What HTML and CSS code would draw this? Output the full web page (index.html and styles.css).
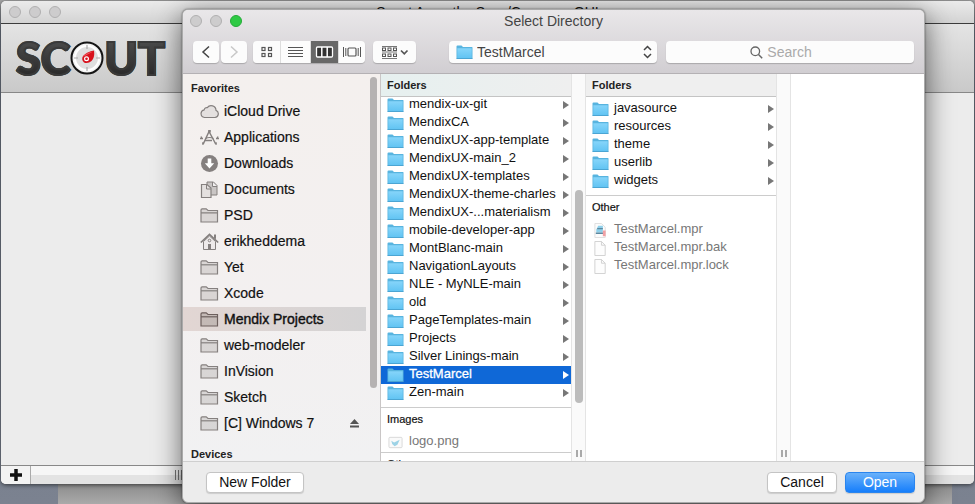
FILE: index.html
```html
<!DOCTYPE html>
<html lang="en">
<head>
<meta charset="utf-8">
<title>Select Directory</title>
<link rel="stylesheet" href="styles.css">
</head>
<body>
<svg class="sprite" aria-hidden="true">
  <defs>
    <linearGradient id="blue" x1="0" y1="0" x2="0" y2="1"><stop offset="0" stop-color="#86d5fa"/><stop offset="1" stop-color="#62c4f3"/></linearGradient>
  </defs>
  <symbol id="folder" viewBox="0 0 17 15">
    <path d="M.5 13.5V1.5q0-1 1-1h4l1.500 1.500h9q.5 0 .5.5v11z" fill="#58b4df"/>
    <path d="M1.300 13V3.300h14.400V13z" fill="url(#blue)"/>
    <path d="M.5 13.500h16" stroke="#4ba5d3"/>
  </symbol>
  <symbol id="gfolder" viewBox="0 0 19 17">
    <path d="M1 14.500V3q0-1.200 1.200-1.200h4L8 3.500h9.500V15H1z" fill="currentColor" fill-opacity=".24" stroke="currentColor" stroke-width="1.200"/>
    <path d="M1 5.800h16.500" stroke="currentColor" stroke-width="1.200"/>
  </symbol>
  <symbol id="cloud" viewBox="0 0 19 17">
    <path d="M4.500 14.500a3.900 3.900 0 0 1-.3-7.700 2.600 2.600 0 0 1 3.100-2.100 4.800 4.800 0 0 1 8.700 2.700 3.700 3.700 0 0 1-1 7.100z" fill="#e4e0df" stroke="currentColor" stroke-width="1.200"/>
  </symbol>
  <symbol id="apps" viewBox="0 0 19 17">
    <g fill="none" stroke="currentColor" stroke-width="1.500"><path d="M3 15.500 9.500 1.500M9 2.500l7 13"/><path d="M5.500 9.500q4-2 8 0" stroke-width="1.200"/><path d="M0 9.500h3M5 11.500h7M16 9.500h3M1 7.500l1 2M18 7.500l-1 2" stroke-width="1.300"/></g>
    <path d="m2 16 .3-3 2 1zM17 16l-.4-3-2 1zM8.200 1h2.600v2.500H8.200z" fill="currentColor"/>
  </symbol>
  <symbol id="down" viewBox="0 0 19 17">
    <circle cx="9.500" cy="8.500" r="8.500" fill="currentColor"/><path d="M7.700 3.500h3.600v4.700h2.900L9.500 13.500 4.800 8.200h2.900z" fill="#fff"/>
  </symbol>
  <symbol id="docs" viewBox="0 0 19 17">
    <path d="M7 1h6.500L17 4.500V14H7z" fill="#c9c5c4" stroke="currentColor"/><path d="M12.500 1v4.500H17" fill="#f2f0f0" stroke="currentColor"/>
    <path d="M1.500 3.500H7L11 7v9.500H1.500z" fill="#e4e0df" stroke="currentColor" stroke-width="1.200"/><path d="M6.500 3.500V8H11" fill="none" stroke="currentColor"/>
  </symbol>
  <symbol id="home" viewBox="0 0 19 17">
    <path d="M3.500 8.500v8h12v-8l-6-5.500z" fill="#eeeaea" stroke="currentColor"/><path d="M.8 9.500 9.500 1.300l8.700 8.200" fill="none" stroke="currentColor" stroke-width="1.700"/><path d="M14 1.500h2v5l-2-2z" fill="currentColor"/><path d="M8 11h3v5.500H8z" fill="currentColor"/><circle cx="9.500" cy="7.500" r="1.300" fill="none" stroke="currentColor"/>
  </symbol>
  <symbol id="file" viewBox="0 0 17 16">
    <path d="M2.500.5h7l4 4v11h-11z" fill="#fdfdfd" stroke="#d0d0d0"/><path d="M9.500.5v4h4" fill="none" stroke="#d0d0d0"/>
  </symbol>
  <symbol id="mpr" viewBox="0 0 17 16">
    <path d="M2.500.5h7l4 4v11h-11z" fill="#fcfcfc" stroke="#dedede"/><path d="M4 7l2-4h5v7H4z" fill="#8fd0ea"/><path d="M5 6h6M3.500 11h8" stroke="#5c88a0" stroke-width="1.500"/><path d="M11 8h3v6h-3z" fill="#f0a0a4"/>
  </symbol>
  <symbol id="image" viewBox="0 0 17 16">
    <rect x="1.500" y="2.500" width="14" height="11" rx="1" fill="#fafafa" stroke="#d8d8d8"/><path d="m4 6 3 2 6-3-2.500 5.500L7.500 12 5 9.500z" fill="#9dd3e6"/>
  </symbol>
</svg>

<main class="app">
  <header class="app-title"><span class="lights"><i></i><i></i><i></i></span><span>Scout App - the Sass/Compass GUI</span></header>
  <div class="brand" role="img" aria-label="Scout">
    <span>SC</span>
    <svg class="compass" viewBox="0 0 34 34">
      <circle cx="17" cy="17" r="15.500" fill="#f3f3f3" stroke="#151515" stroke-width="2"/>
      <circle cx="17" cy="17" r="12" fill="#dfdfdf" stroke="#fff" stroke-width="2"/>
      <path d="M17 4v4M17 26v4M4 17h4M26 17h4" stroke="#aaa" stroke-width="1.200"/>
      <path d="M24 9.500q1 7-2.500 10.500-3.500 3-7.500 1.500-3-3-1-6.500Q17 10.500 24 9.500z" fill="#d8121d"/>
      <path d="M23 10.500 13 16q2-4 10-5.500z" fill="#f4545b"/>
      <circle cx="16.500" cy="17.800" r="2.500" fill="#fff"/><circle cx="16.500" cy="17.800" r="1.300" fill="#d8121d"/>
    </svg>
    <span>UT</span>
  </div>
  <div class="app-body"></div>
  <footer class="app-foot">
    <button class="add" aria-label="Add"><svg viewBox="0 0 12 12"><path d="M6 0v12M0 6h12" stroke="#111" stroke-width="3.500"/></svg></button>
    <span class="grip"></span>
  </footer>
</main>

<section class="dialog" role="dialog" aria-labelledby="dlg-title">
  <header class="top">
    <div class="title-row"><span class="lights"><i></i><i></i><i class="green"></i></span><h1 id="dlg-title">Select Directory</h1></div>
    <div class="tools">
      <div class="nav-buttons">
        <button class="back" aria-label="Back"><svg width="26" height="22" viewBox="0 0 26 22"><path d="m16 5.500-6 5.500 6 5.500" fill="none" stroke="#444" stroke-width="1.500"/></svg></button>
        <button class="forward" aria-label="Forward"><svg width="26" height="22" viewBox="0 0 26 22"><path d="m10 5.500 6 5.500-6 5.500" fill="none" stroke="#c8c8c8" stroke-width="1.500"/></svg></button>
      </div>
      <div class="views">
        <button aria-label="Icons"><svg width="27" height="22" viewBox="0 0 27 22"><g fill="none" stroke="#555" stroke-width="1.200"><rect x="9" y="6.500" width="3" height="3"/><rect x="15.500" y="6.500" width="3" height="3"/><rect x="9" y="12.500" width="3" height="3"/><rect x="15.500" y="12.500" width="3" height="3"/></g></svg></button>
        <button aria-label="List"><svg width="29" height="22" viewBox="0 0 29 22"><path d="M7 6.500h15M7 9.500h15M7 12.500h15M7 15.500h15" stroke="#555"/></svg></button>
        <button class="on" aria-label="Columns" aria-pressed="true"><svg width="27" height="22" viewBox="0 0 27 22"><rect x="5.500" y="6" width="16" height="10" rx="1" fill="#333" stroke="#fff" stroke-width="1.300"/><path d="M10.800 6v10M16.200 6v10" stroke="#fff" stroke-width="1.500"/></svg></button>
        <button aria-label="Cover flow"><svg width="26" height="22" viewBox="0 0 26 22"><g fill="none" stroke="#555"><rect x="9" y="7" width="8" height="8" rx="1" stroke-width="1.200"/><path d="M4.500 6v10M6.800 7v8M19.200 7v8M21.500 6v10"/></g></svg></button>
      </div>
      <button class="arrange" aria-label="Arrange"><svg width="43" height="22" viewBox="0 0 43 22"><g fill="none" stroke="#555"><path d="M9 5.500h15M9 11h15M9 17.500h15" stroke-width=".8"/><rect x="9.500" y="7" width="3" height="2.500"/><rect x="15" y="7" width="3" height="2.500"/><rect x="20.500" y="7" width="3" height="2.500"/><rect x="9.500" y="13" width="3" height="2.500"/><rect x="15" y="13" width="3" height="2.500"/><rect x="20.500" y="13" width="3" height="2.500"/><path d="m28 9.500 3.300 3.300 3.200-3.300" stroke-width="1.700"/></g></svg></button>
      <div class="path">
        <svg class="ic"><use href="#folder"/></svg>
        <select aria-label="Current folder"><option>TestMarcel</option></select>
        <svg class="updown" viewBox="0 0 9 14"><path d="m1 5 3.500-3.500L8 5M1 9l3.500 3.500L8 9" fill="none" stroke="#444" stroke-width="1.500"/></svg>
      </div>
      <label class="search">
        <svg viewBox="0 0 13 13"><circle cx="5.300" cy="5.300" r="4.300" fill="none" stroke="#666" stroke-width="1.300"/><path d="m8.500 8.500 3.700 3.700" stroke="#666" stroke-width="1.500"/></svg>
        <input type="search" placeholder="Search" aria-label="Search">
      </label>
    </div>
  </header>

  <div class="browser">
    <aside class="side">
      <nav>
        <h2>Favorites</h2>
        <ul>
          <li><svg><use href="#cloud"/></svg>iCloud Drive</li>
          <li><svg><use href="#apps"/></svg>Applications</li>
          <li><svg><use href="#down"/></svg>Downloads</li>
          <li><svg><use href="#docs"/></svg>Documents</li>
          <li><svg><use href="#gfolder"/></svg>PSD</li>
          <li><svg><use href="#home"/></svg>erikheddema</li>
          <li><svg><use href="#gfolder"/></svg>Yet</li>
          <li><svg><use href="#gfolder"/></svg>Xcode</li>
          <li class="current"><svg><use href="#gfolder"/></svg>Mendix Projects</li>
          <li><svg><use href="#gfolder"/></svg>web-modeler</li>
          <li><svg><use href="#gfolder"/></svg>InVision</li>
          <li><svg><use href="#gfolder"/></svg>Sketch</li>
          <li><svg><use href="#gfolder"/></svg>[C] Windows 7<button class="eject" aria-label="Eject"><svg viewBox="0 0 9 9"><path d="M4.500 0 9 5H0zM0 6.500h9v2H0z" fill="#555"/></svg></button></li>
        </ul>
        <h2 class="devices">Devices</h2>
      </nav>
      <div class="bar"><i></i></div>
    </aside>

    <div class="col">
      <h2 class="col-head tint">Folders</h2>
      <div class="col-body">
        <ul class="rows scrolled">
          <li><svg><use href="#folder"/></svg><span>mendix-ux-git</span></li>
          <li><svg><use href="#folder"/></svg><span>MendixCA</span></li>
          <li><svg><use href="#folder"/></svg><span>MendixUX-app-template</span></li>
          <li><svg><use href="#folder"/></svg><span>MendixUX-main_2</span></li>
          <li><svg><use href="#folder"/></svg><span>MendixUX-templates</span></li>
          <li><svg><use href="#folder"/></svg><span>MendixUX-theme-charles</span></li>
          <li><svg><use href="#folder"/></svg><span>MendixUX-...materialism</span></li>
          <li><svg><use href="#folder"/></svg><span>mobile-developer-app</span></li>
          <li><svg><use href="#folder"/></svg><span>MontBlanc-main</span></li>
          <li><svg><use href="#folder"/></svg><span>NavigationLayouts</span></li>
          <li><svg><use href="#folder"/></svg><span>NLE - MyNLE-main</span></li>
          <li><svg><use href="#folder"/></svg><span>old</span></li>
          <li><svg><use href="#folder"/></svg><span>PageTemplates-main</span></li>
          <li><svg><use href="#folder"/></svg><span>Projects</span></li>
          <li><svg><use href="#folder"/></svg><span>Silver Linings-main</span></li>
          <li class="selected"><svg><use href="#folder"/></svg><span>TestMarcel</span></li>
          <li><svg><use href="#folder"/></svg><span>Zen-main</span></li>
        </ul>
        <h3>Images</h3>
        <ul class="rows files"><li><svg><use href="#image"/></svg><span>logo.png</span></li></ul>
        <h3>Other</h3>
      </div>
    </div>
    <div class="gutter"><i></i><b></b></div>

    <div class="col">
      <h2 class="col-head">Folders</h2>
      <div class="col-body">
        <ul class="rows">
          <li><svg><use href="#folder"/></svg><span>javasource</span></li>
          <li><svg><use href="#folder"/></svg><span>resources</span></li>
          <li><svg><use href="#folder"/></svg><span>theme</span></li>
          <li><svg><use href="#folder"/></svg><span>userlib</span></li>
          <li><svg><use href="#folder"/></svg><span>widgets</span></li>
        </ul>
        <h3>Other</h3>
        <ul class="rows files">
          <li><svg><use href="#mpr"/></svg><span>TestMarcel.mpr</span></li>
          <li><svg><use href="#file"/></svg><span>TestMarcel.mpr.bak</span></li>
          <li><svg><use href="#file"/></svg><span>TestMarcel.mpr.lock</span></li>
        </ul>
      </div>
    </div>
    <div class="gutter"><b></b></div>
  </div>

  <footer class="actions">
    <button class="new">New Folder</button>
    <button>Cancel</button>
    <button class="primary">Open</button>
  </footer>
</section>
</body>
</html>
```
FILE: styles.css
```css
* { box-sizing: border-box; }

body {
  margin: 0;
  height: 100vh;
  display: flex;
  flex-direction: column;
  overflow: hidden;
  position: relative;
  padding: 1px 1px 20px;
  font-family: "Liberation Sans", Arial, sans-serif;
  font-size: 13px;
  color: #111;
  background:
    linear-gradient(#8c8c8c, #aaa) 58px 100% / calc(100% - 81px) 20px no-repeat,
    linear-gradient(#a5a5a5, #6b7380 30px, #7b8290);
}

button, input, select { font: inherit; color: inherit; margin: 0; padding: 0; border: 0; background: none; }
h1, h2, h3, ul { margin: 0; padding: 0; list-style: none; }
svg { display: block; flex: none; }
.sprite { position: absolute; width: 0; height: 0; }

.lights { display: flex; gap: 8px; }
.lights i { width: 12px; height: 12px; border-radius: 50%; background: #cdcccd; border: 1px solid #b0afb0; }
.lights .green { background: #2fca45; border-color: #24ab38; }

/* Window behind the dialog */
.app {
  flex: 1;
  display: flex;
  flex-direction: column;
  border-radius: 5px;
  overflow: hidden;
  background: #ececec;
  box-shadow: 0 1px 4px #0009;
}
.app-title {
  height: 23px;
  display: grid;
  grid-template-columns: 1fr auto 1fr;
  align-items: center;
  padding: 0 8px;
  background: linear-gradient(#ebebeb, #d3d3d3);
  border-bottom: 1px solid #3c3c3c;
  font-size: 14px;
}
.brand {
  height: 69px;
  display: flex;
  align-items: center;
  padding-left: 15px;
  border-bottom: 1px solid #888;
  background: linear-gradient(#e4e4e4, #c9c9c9);
  font: 900 45px/60px Lato, sans-serif;
}
.brand span {
  color: transparent;
  background: linear-gradient(#4c4c4c 20%, #2a2a2a 80%);
  background-clip: text;
  -webkit-text-stroke: 2px #3a3a3a;
}
.compass { width: 34px; height: 34px; }
.app-body { flex: 1; }
.app-foot { height: 19px; display: flex; border-top: 1px solid #888; background: linear-gradient(#f6f6f6 50%, #e3e3e3 50%); }
.add { width: 30px; display: grid; place-items: center; border-right: 1px solid #aaa; background: #f3f3f3; }
.add svg { width: 12px; height: 12px; }
.grip { width: 10px; height: 10px; margin: 4px 0 0 144px; background: repeating-linear-gradient(90deg, #777 0 1px, transparent 1px 3px); }

/* Dialog */
.dialog {
  position: absolute;
  inset: 9px 50px 1px 182px;
  display: flex;
  flex-direction: column;
  overflow: hidden;
  border: 1px solid #aaa;
  border-radius: 6px;
  background: #ececec;
  box-shadow: 0 6px 28px #0009, 0 0 2px #0008;
}
.top { height: 64px; background: linear-gradient(#e9e7e9, #d1ced2); border-bottom: 1px solid #b4b1b4; }
.title-row { height: 21px; display: grid; grid-template-columns: 1fr auto 1fr; align-items: center; padding: 0 7px; }
h1 { font-size: 14px; font-weight: 400; line-height: 18px; color: #444; }

.tools { display: flex; padding: 10px 10px 0; height: 32px; }
.tools button, .path, .search { height: 22px; background: #fcfcfc; }
.nav-buttons { display: flex; gap: 2px; margin-right: 6px; }
.nav-buttons button, .arrange, .path, .search { border-radius: 4px; box-shadow: 0 1px 1px #0003; }
.views { display: flex; gap: 1px; margin-right: 8px; border-radius: 4px; overflow: hidden; background: #ddd; box-shadow: 0 1px 1px #0003; }
.tools .on { background: #686868; }
.path { flex: 1; margin: 0 9px 0 33px; display: flex; align-items: center; padding: 0 5px 0 7px; gap: 4px; color: #444; }
.path select { flex: 1; min-width: 0; appearance: none; font-size: 14px; }
.ic { width: 17px; height: 15px; }
.updown { width: 9px; height: 14px; }
.search { width: 248px; display: flex; align-items: center; gap: 4px; }
.search svg { width: 13px; height: 13px; margin-left: 34%; }
.search input { flex: 1; min-width: 0; font-size: 14px; outline: 0; }
.search input::placeholder { color: #aaa; }

.browser { flex: 1; min-height: 0; display: flex; background: #fff; }
h2 { font-size: 11px; font-weight: 700; line-height: 18px; color: #222; }

.side { width: 198px; display: flex; overflow: hidden; border-right: 1px solid #c9c6c6; background: linear-gradient(#f4f0ee, #f3f0f0 60%, #f1f1f2); }
.side nav { flex: 1; }
.side h2 { margin: 5px 0 2px; padding-left: 8px; }
.side .devices { margin-top: 10px; }
.side ul { display: grid; gap: 2px; -webkit-text-stroke: 0.2px #111; }
.side li { height: 24px; display: flex; align-items: center; gap: 5px; padding: 0 7px 0 17px; font-size: 14px; color: #111; }
.side li > svg { width: 19px; height: 17px; color: #85807f; }
.side .current { background: linear-gradient(90deg, #e2d6d3, #d4d3d4); -webkit-text-stroke: 0.4px #111; }
.side .current > svg { color: #6d5f5d; }
.eject { margin-left: auto; }
.eject svg { width: 9px; height: 9px; }
.bar { width: 14px; padding: 3px 3px 0 4px; }
.bar i { display: block; height: 81%; border-radius: 4px; background: #b5b2b2; }

.col { width: 190px; display: flex; flex-direction: column; min-height: 0; }
.col-head { height: 23px; line-height: 22px; padding-left: 6px; background: #efefef; border-bottom: 1px solid #c4c4c4; }
.tint { background: linear-gradient(90deg, #e6f0ef, #efefef); }
.col-body { flex: 1; overflow: hidden; }
.rows { padding: 3px 0 5px; }
.rows.scrolled { margin-top: -4px; }
.rows li { height: 18px; line-height: 16px; display: flex; align-items: center; gap: 5px; padding: 0 2px 0 6px; }
.rows li > svg { width: 17px; height: 15px; }
.rows li span { flex: 1; white-space: nowrap; padding-bottom: 2px; }
.rows li::after { content: ""; border: solid transparent; border-width: 4px 0 4px 6px; border-left-color: #777; }
.rows .selected { background: #0f68d7; color: #fff; -webkit-text-stroke: 0.3px #fff; }
.rows .selected::after { border-left-color: #fff; }
.rows.files { color: #777; padding: 0 0 1px; }
.files li::after { visibility: hidden; }
h3 { font-size: 11px; font-weight: 400; line-height: 22px; height: 26px; padding-left: 6px; border-top: 1px solid #ccc; -webkit-text-stroke: 0.2px #111; }

.gutter { width: 15px; position: relative; background: #fafafa; border: solid #e4e4e4; border-width: 0 1px; }
.gutter i { position: absolute; inset: 30% 2px 15% 3px; border-radius: 4px; background: #bcbcbc; }
.gutter b { position: absolute; left: 4px; bottom: 4px; width: 6px; height: 7px; border: solid #aaa; border-width: 0 2px; }

.actions { height: 41px; display: flex; align-items: center; gap: 8px; padding: 0 9px 0 23px; border-top: 1px solid #cfcfcf; }
.actions button { height: 21px; line-height: 18px; font-size: 14px; min-width: 70px; border: 1px solid #c4c4c4; border-radius: 4px; background: #fff; box-shadow: 0 1px 1px #0002; }
.actions .new { width: 98px; margin-right: auto; }
.actions .primary { color: #fff; border-color: #2a85ee; background: linear-gradient(#69b1fa, #167efb); }
```
